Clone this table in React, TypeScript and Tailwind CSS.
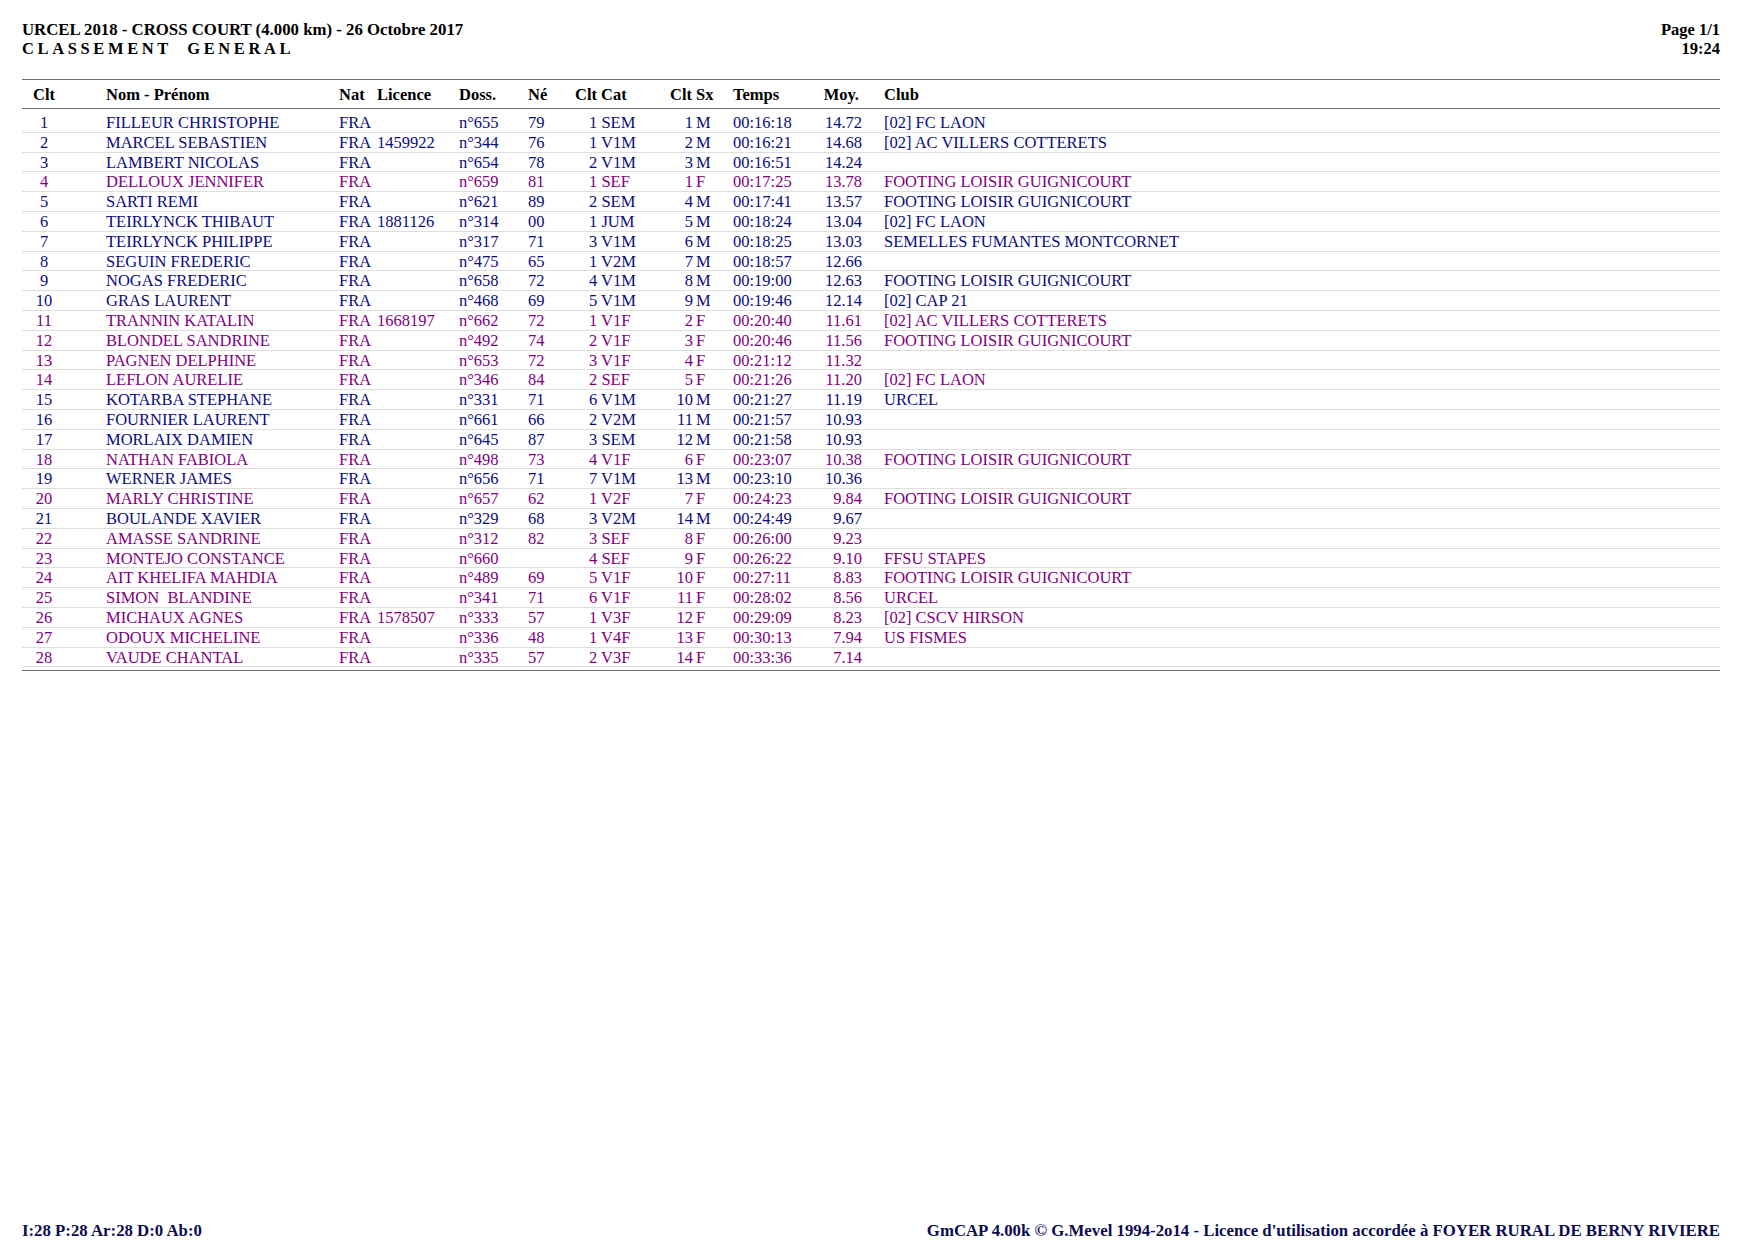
import React from "react";

type Row = {
    clt: string;
    nom: string;
    licence: string;
    doss: string;
    ne: string;
    cat: string;
    sxNum: string;
    sx: "M" | "F";
    temps: string;
    moy: string;
    club: string;
};

const rows: Row[] = [
    { clt: "1", nom: "FILLEUR CHRISTOPHE", licence: "", doss: "n°655", ne: "79", cat: "1 SEM", sxNum: "1", sx: "M", temps: "00:16:18", moy: "14.72", club: "[02] FC LAON" },
    { clt: "2", nom: "MARCEL SEBASTIEN", licence: "1459922", doss: "n°344", ne: "76", cat: "1 V1M", sxNum: "2", sx: "M", temps: "00:16:21", moy: "14.68", club: "[02] AC VILLERS COTTERETS" },
    { clt: "3", nom: "LAMBERT NICOLAS", licence: "", doss: "n°654", ne: "78", cat: "2 V1M", sxNum: "3", sx: "M", temps: "00:16:51", moy: "14.24", club: "" },
    { clt: "4", nom: "DELLOUX JENNIFER", licence: "", doss: "n°659", ne: "81", cat: "1 SEF", sxNum: "1", sx: "F", temps: "00:17:25", moy: "13.78", club: "FOOTING LOISIR GUIGNICOURT" },
    { clt: "5", nom: "SARTI REMI", licence: "", doss: "n°621", ne: "89", cat: "2 SEM", sxNum: "4", sx: "M", temps: "00:17:41", moy: "13.57", club: "FOOTING LOISIR GUIGNICOURT" },
    { clt: "6", nom: "TEIRLYNCK THIBAUT", licence: "1881126", doss: "n°314", ne: "00", cat: "1 JUM", sxNum: "5", sx: "M", temps: "00:18:24", moy: "13.04", club: "[02] FC LAON" },
    { clt: "7", nom: "TEIRLYNCK PHILIPPE", licence: "", doss: "n°317", ne: "71", cat: "3 V1M", sxNum: "6", sx: "M", temps: "00:18:25", moy: "13.03", club: "SEMELLES FUMANTES MONTCORNET" },
    { clt: "8", nom: "SEGUIN FREDERIC", licence: "", doss: "n°475", ne: "65", cat: "1 V2M", sxNum: "7", sx: "M", temps: "00:18:57", moy: "12.66", club: "" },
    { clt: "9", nom: "NOGAS FREDERIC", licence: "", doss: "n°658", ne: "72", cat: "4 V1M", sxNum: "8", sx: "M", temps: "00:19:00", moy: "12.63", club: "FOOTING LOISIR GUIGNICOURT" },
    { clt: "10", nom: "GRAS LAURENT", licence: "", doss: "n°468", ne: "69", cat: "5 V1M", sxNum: "9", sx: "M", temps: "00:19:46", moy: "12.14", club: "[02] CAP 21" },
    { clt: "11", nom: "TRANNIN KATALIN", licence: "1668197", doss: "n°662", ne: "72", cat: "1 V1F", sxNum: "2", sx: "F", temps: "00:20:40", moy: "11.61", club: "[02] AC VILLERS COTTERETS" },
    { clt: "12", nom: "BLONDEL SANDRINE", licence: "", doss: "n°492", ne: "74", cat: "2 V1F", sxNum: "3", sx: "F", temps: "00:20:46", moy: "11.56", club: "FOOTING LOISIR GUIGNICOURT" },
    { clt: "13", nom: "PAGNEN DELPHINE", licence: "", doss: "n°653", ne: "72", cat: "3 V1F", sxNum: "4", sx: "F", temps: "00:21:12", moy: "11.32", club: "" },
    { clt: "14", nom: "LEFLON AURELIE", licence: "", doss: "n°346", ne: "84", cat: "2 SEF", sxNum: "5", sx: "F", temps: "00:21:26", moy: "11.20", club: "[02] FC LAON" },
    { clt: "15", nom: "KOTARBA STEPHANE", licence: "", doss: "n°331", ne: "71", cat: "6 V1M", sxNum: "10", sx: "M", temps: "00:21:27", moy: "11.19", club: "URCEL" },
    { clt: "16", nom: "FOURNIER LAURENT", licence: "", doss: "n°661", ne: "66", cat: "2 V2M", sxNum: "11", sx: "M", temps: "00:21:57", moy: "10.93", club: "" },
    { clt: "17", nom: "MORLAIX DAMIEN", licence: "", doss: "n°645", ne: "87", cat: "3 SEM", sxNum: "12", sx: "M", temps: "00:21:58", moy: "10.93", club: "" },
    { clt: "18", nom: "NATHAN FABIOLA", licence: "", doss: "n°498", ne: "73", cat: "4 V1F", sxNum: "6", sx: "F", temps: "00:23:07", moy: "10.38", club: "FOOTING LOISIR GUIGNICOURT" },
    { clt: "19", nom: "WERNER JAMES", licence: "", doss: "n°656", ne: "71", cat: "7 V1M", sxNum: "13", sx: "M", temps: "00:23:10", moy: "10.36", club: "" },
    { clt: "20", nom: "MARLY CHRISTINE", licence: "", doss: "n°657", ne: "62", cat: "1 V2F", sxNum: "7", sx: "F", temps: "00:24:23", moy: "9.84", club: "FOOTING LOISIR GUIGNICOURT" },
    { clt: "21", nom: "BOULANDE XAVIER", licence: "", doss: "n°329", ne: "68", cat: "3 V2M", sxNum: "14", sx: "M", temps: "00:24:49", moy: "9.67", club: "" },
    { clt: "22", nom: "AMASSE SANDRINE", licence: "", doss: "n°312", ne: "82", cat: "3 SEF", sxNum: "8", sx: "F", temps: "00:26:00", moy: "9.23", club: "" },
    { clt: "23", nom: "MONTEJO CONSTANCE", licence: "", doss: "n°660", ne: "", cat: "4 SEF", sxNum: "9", sx: "F", temps: "00:26:22", moy: "9.10", club: "FFSU STAPES" },
    { clt: "24", nom: "AIT KHELIFA MAHDIA", licence: "", doss: "n°489", ne: "69", cat: "5 V1F", sxNum: "10", sx: "F", temps: "00:27:11", moy: "8.83", club: "FOOTING LOISIR GUIGNICOURT" },
    { clt: "25", nom: "SIMON  BLANDINE", licence: "", doss: "n°341", ne: "71", cat: "6 V1F", sxNum: "11", sx: "F", temps: "00:28:02", moy: "8.56", club: "URCEL" },
    { clt: "26", nom: "MICHAUX AGNES", licence: "1578507", doss: "n°333", ne: "57", cat: "1 V3F", sxNum: "12", sx: "F", temps: "00:29:09", moy: "8.23", club: "[02] CSCV HIRSON" },
    { clt: "27", nom: "ODOUX MICHELINE", licence: "", doss: "n°336", ne: "48", cat: "1 V4F", sxNum: "13", sx: "F", temps: "00:30:13", moy: "7.94", club: "US FISMES" },
    { clt: "28", nom: "VAUDE CHANTAL", licence: "", doss: "n°335", ne: "57", cat: "2 V3F", sxNum: "14", sx: "F", temps: "00:33:36", moy: "7.14", club: "" },
];

const App = () => {
    return (
        <div
            className="h-[1240px] w-[1754px] bg-white pl-[22px] pr-[34px] flex flex-col text-[16.5px] text-black"
            style={{ fontFamily: '"Liberation Serif", "Times New Roman", serif' }}
        >
            {/* page header */}
            <div className="flex flex-row justify-between pt-[20px] font-bold leading-[19px]">
                <div>
                    <p className="text-[16.8px]">URCEL 2018 - CROSS COURT (4.000 km) - 26 Octobre 2017</p>
                    <p className="tracking-[0.22em] whitespace-pre">CLASSEMENT  GENERAL</p>
                </div>
                <div className="text-right">
                    <p>Page 1/1</p>
                    <p>19:24</p>
                </div>
            </div>

            {/* table */}
            <div className="mt-[21px] border-t-[1.5px] border-[#6e6e6e]">
                <div className="flex flex-row h-[29px] pt-[5px] leading-[20px] font-bold border-b-[1.5px] border-[#6e6e6e]">
                    <div className="w-[44px] text-center">Clt</div>
                    <div className="w-[273px] pl-[40px]">Nom - Prénom</div>
                    <div className="w-[38px]">Nat</div>
                    <div className="w-[82px]">Licence</div>
                    <div className="w-[69px]">Doss.</div>
                    <div className="w-[47px]">Né</div>
                    <div className="w-[95px]">Clt Cat</div>
                    <div className="w-[63px]">Clt Sx</div>
                    <div className="w-[86px]">Temps</div>
                    <div className="w-[43px] text-right pr-[3px]">Moy.</div>
                    <div className="pl-[22px]">Club</div>
                </div>

                <div className="pt-[4px] pb-[3px] border-b-[1.5px] border-[#6e6e6e]">
                    {rows.map((r) => (
                        <div
                            key={r.clt}
                            className={
                                "flex flex-row h-[19.8px] leading-[19px] border-b border-[#dedede] " +
                                (r.sx === "F" ? "text-[#800080]" : "text-[#0b0b80]")
                            }
                        >
                            <div className="w-[44px] text-center">{r.clt}</div>
                            <div className="w-[273px] pl-[40px] whitespace-pre">{r.nom}</div>
                            <div className="w-[38px]">FRA</div>
                            <div className="w-[82px]">{r.licence}</div>
                            <div className="w-[69px]">{r.doss}</div>
                            <div className="w-[47px]">{r.ne}</div>
                            <div className="w-[95px] pl-[14px]">{r.cat}</div>
                            <div className="w-[63px] flex flex-row">
                                <span className="w-[23px] text-right">{r.sxNum}</span>
                                <span className="ml-[3px]">{r.sx}</span>
                            </div>
                            <div className="w-[86px]">{r.temps}</div>
                            <div className="w-[43px] text-right">{r.moy}</div>
                            <div className="pl-[22px]">{r.club}</div>
                        </div>
                    ))}
                </div>
            </div>

            {/* page footer */}
            <div className="mt-auto flex flex-row justify-between font-bold leading-[19px] text-[16.8px] text-[#0c0c52]">
                <p>I:28 P:28 Ar:28 D:0 Ab:0</p>
                <p>
                    GmCAP 4.00k © G.Mevel 1994-2o14 - Licence d'utilisation accordée à FOYER RURAL DE BERNY RIVIERE
                </p>
            </div>
        </div>
    );
};

export default App;
